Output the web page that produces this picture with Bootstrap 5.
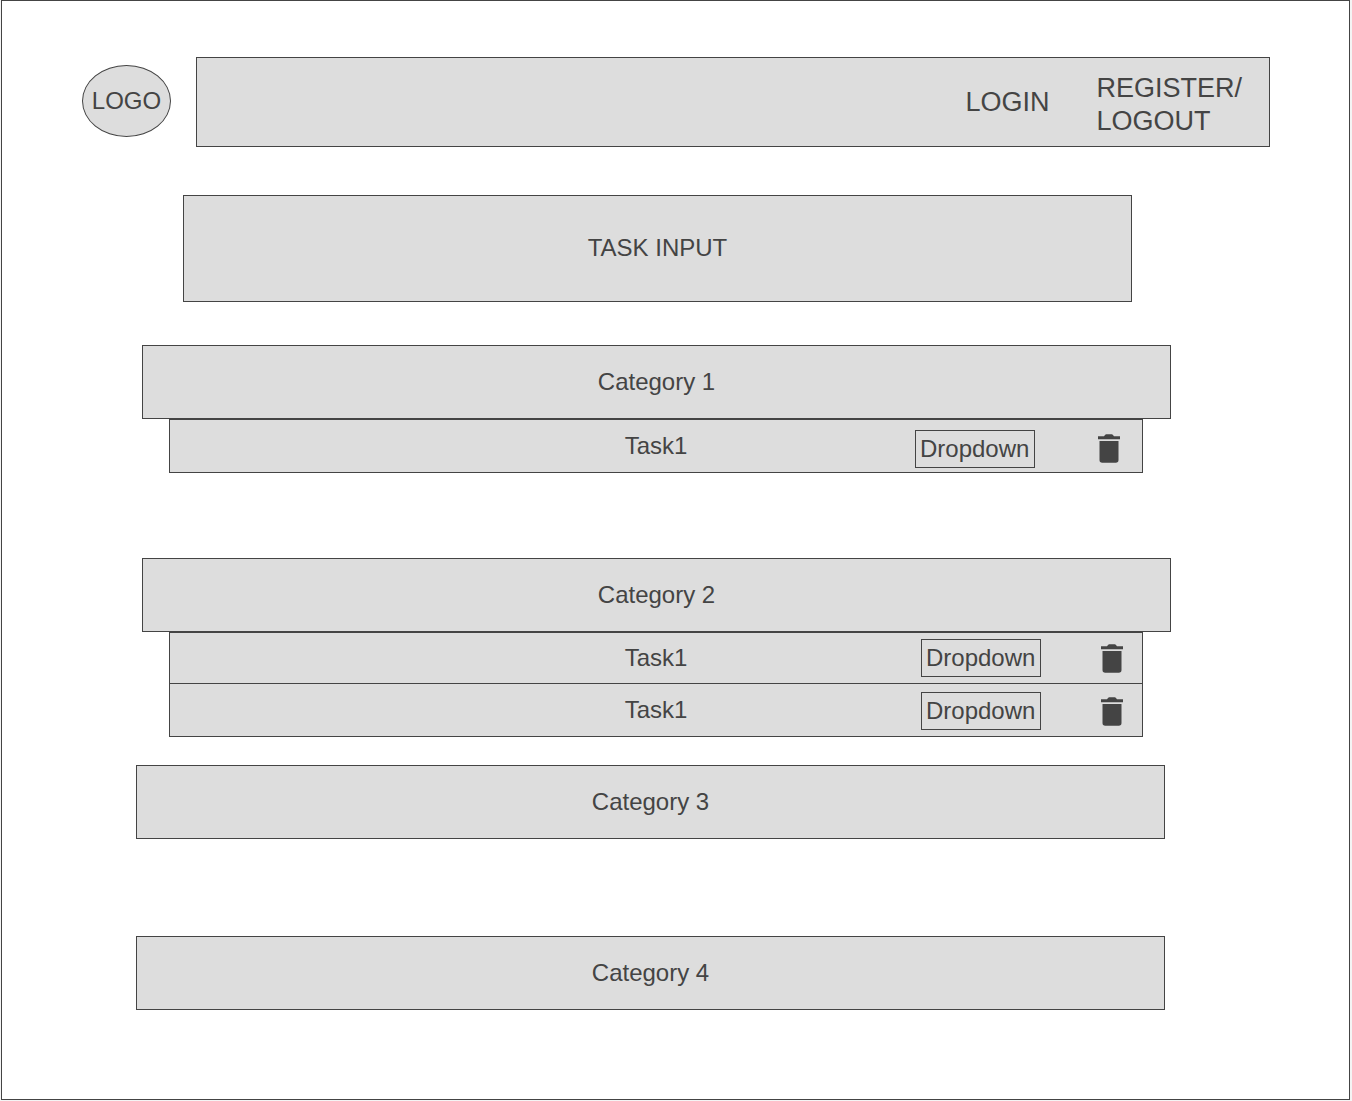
<!DOCTYPE html>
<html lang="en">
<head>
<meta charset="utf-8">
<meta name="viewport" content="width=device-width, initial-scale=1">
<title>Task list wireframe</title>
<link href="https://cdn.jsdelivr.net/npm/bootstrap@5.3.0/dist/css/bootstrap.min.css" rel="stylesheet">
<style>
  :root { --ink: #444; --fill: #ddd; }
  body { font-family: "Liberation Sans", Arial, sans-serif; font-size: 24px; line-height: 28px; color: var(--ink); background: #f4f4f4; }
  .frame { margin: 0 2px 1px 1px; border: 1px solid var(--ink); padding: 56px 0 89px; background: #fff; }
  .shape { background: var(--fill); border: 1px solid var(--ink); border-radius: 0; color: var(--ink); }
  .site-header { margin: 0 79px 0 80px; gap: 25px; }
  .logo { width: 89px; height: 72px; margin-bottom: 2px; border-radius: 50%; }
  .topbar { min-height: 90px; padding-right: 27px; gap: 47px; font-size: 27px; line-height: 33px; }
  .topbar a, .logo { color: var(--ink); text-decoration: none; }
  .topbar .two-line { padding-top: 6px; }
  .task-form { margin: 48px 217px 43px 181px; }
  .task-entry { height: 107px; font-size: 24px; text-align: center; padding: 0 0 2px; }
  .task-entry::placeholder { color: var(--ink); opacity: 1; }
  .category { margin: 0 178px 85px 140px; }
  .category.compact { margin-bottom: 28px; }
  .category.shifted { margin: 0 184px 97px 134px; }
  .category.shifted:last-child { margin-bottom: 0; }
  .category h2 { height: 74px; margin: 0; font-size: 24px; line-height: 28px; font-weight: 400; }
  .tasks { margin: 0 28px 0 27px; }
  .task { display: grid; grid-template-columns: 1fr auto 1fr; align-items: center; height: 54px; }
  .task:not(:last-child) { height: 51px; border-bottom: 0; }
  .task-name { grid-column: 2; }
  .controls { gap: 60px; padding-right: 19px; }
  .controls.low { gap: 63px; padding: 5px 22px 0 0; }
  .task + .task .controls { padding-top: 2px; }
  .picker { appearance: none; width: 120px; height: 38px; padding: 0 0 0 4px; font-size: 24px; line-height: 28px; }
  .trash { display: flex; padding: 0; border: 0; background: none; color: var(--ink); }
  @media (max-width: 900px) {
    .site-header, .task-form, .category, .category.shifted { margin-left: 16px; margin-right: 16px; }
    .tasks { margin: 0 8px; }
    .controls, .controls.low { gap: 12px; padding-right: 8px; }
    .task { grid-template-columns: 8px auto 1fr; }
  }
</style>
</head>
<body>
<svg class="d-none" aria-hidden="true">
  <symbol id="bin" viewBox="0 0 22 29">
    <path fill="currentColor" d="M0 2.200h6L7.200.8Q7.600.3 8.300.3h5.400q.7 0 1.100.5L16 2.200h6v3H0zM1.500 7h19v19q0 2.700-2.700 2.700H4.200Q1.500 28.700 1.500 26z"/>
  </symbol>
</svg>
<div class="frame">
  <header class="site-header d-flex align-items-center">
    <a href="#" class="logo shape d-flex align-items-center justify-content-center flex-shrink-0">LOGO</a>
    <nav class="topbar shape d-flex align-items-center justify-content-end flex-grow-1" aria-label="Account">
      <a href="#">LOGIN</a>
      <a href="#" class="two-line">REGISTER/<br>LOGOUT</a>
    </nav>
  </header>
  <main>
    <form class="task-form">
      <input type="text" class="task-entry shape d-block w-100" placeholder="TASK INPUT" aria-label="TASK INPUT">
    </form>
    <section class="category">
      <h2 class="shape d-flex align-items-center justify-content-center">Category 1</h2>
      <ul class="tasks list-unstyled">
        <li class="task shape">
          <span class="task-name">Task1</span>
          <div class="controls low d-flex align-items-center justify-content-end">
            <select class="picker shape" aria-label="Category"><option>Dropdown</option></select>
            <button type="button" class="trash" aria-label="Delete"><svg width="22" height="29"><use href="#bin"/></svg></button>
          </div>
        </li>
      </ul>
    </section>
    <section class="category compact">
      <h2 class="shape d-flex align-items-center justify-content-center">Category 2</h2>
      <ul class="tasks list-unstyled">
        <li class="task shape">
          <span class="task-name">Task1</span>
          <div class="controls d-flex align-items-center justify-content-end">
            <select class="picker shape" aria-label="Category"><option>Dropdown</option></select>
            <button type="button" class="trash" aria-label="Delete"><svg width="22" height="29"><use href="#bin"/></svg></button>
          </div>
        </li>
        <li class="task shape">
          <span class="task-name">Task1</span>
          <div class="controls d-flex align-items-center justify-content-end">
            <select class="picker shape" aria-label="Category"><option>Dropdown</option></select>
            <button type="button" class="trash" aria-label="Delete"><svg width="22" height="29"><use href="#bin"/></svg></button>
          </div>
        </li>
      </ul>
    </section>
    <section class="category shifted">
      <h2 class="shape d-flex align-items-center justify-content-center">Category 3</h2>
    </section>
    <section class="category shifted">
      <h2 class="shape d-flex align-items-center justify-content-center">Category 4</h2>
    </section>
  </main>
</div>
<script src="https://cdn.jsdelivr.net/npm/bootstrap@5.3.0/dist/js/bootstrap.bundle.min.js"></script>
</body>
</html>
